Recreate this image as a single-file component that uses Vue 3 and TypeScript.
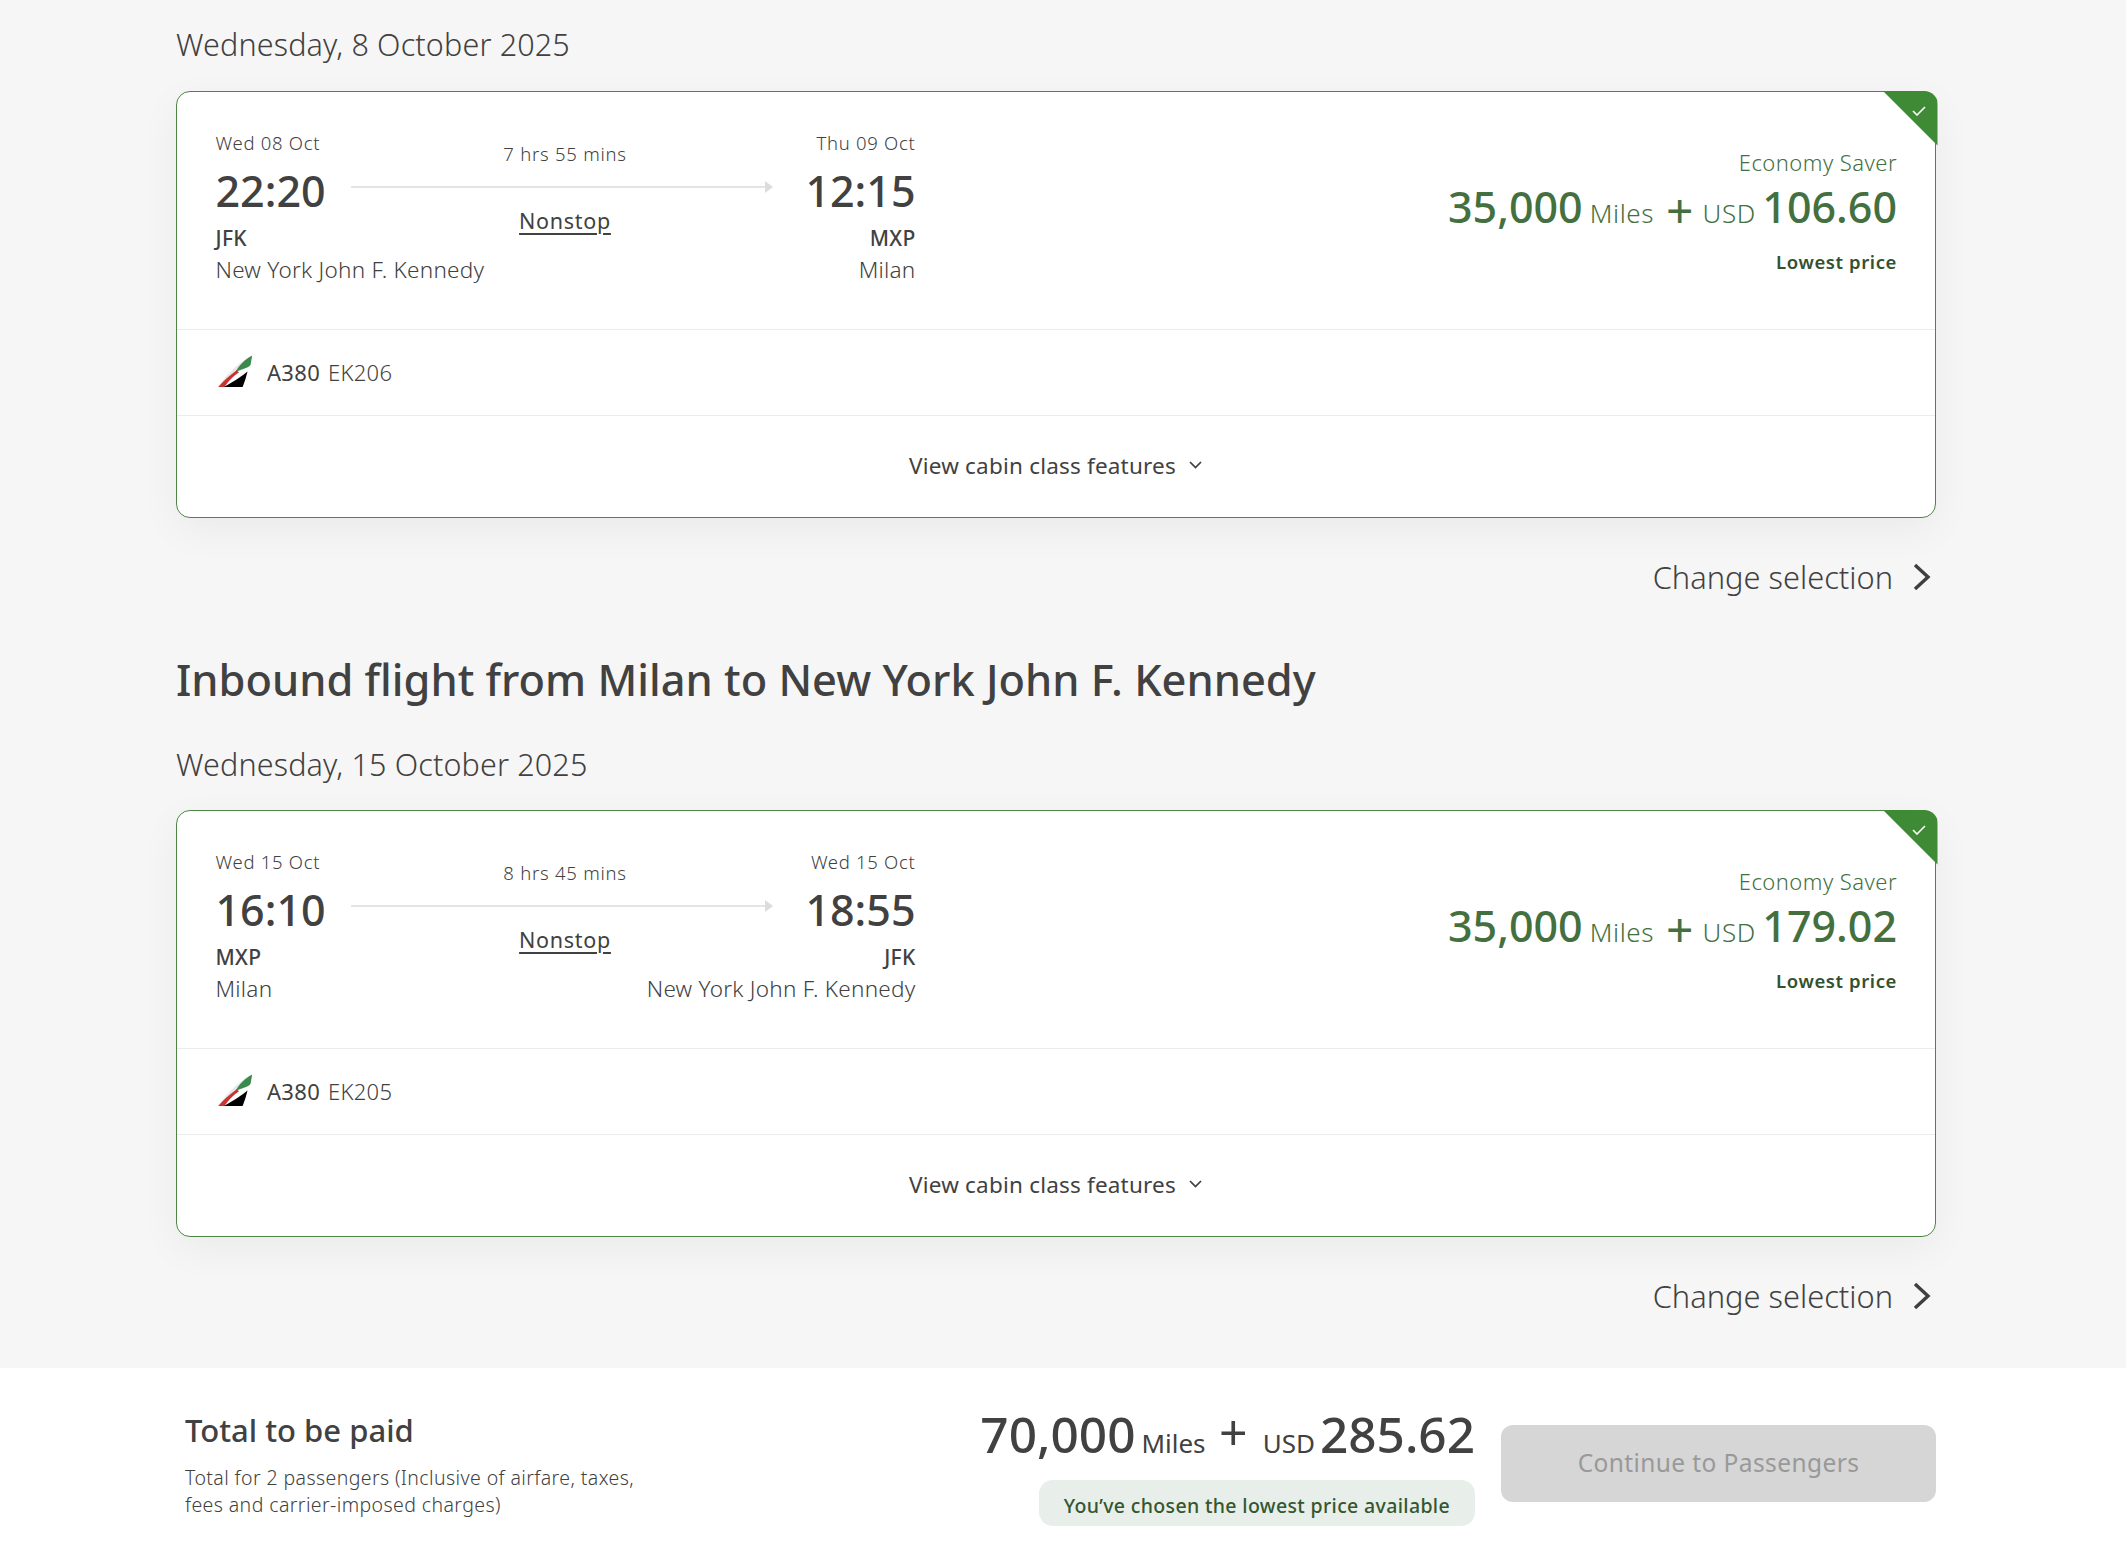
<script setup lang="ts">
interface Flight {
  date: string
  fromDate: string
  toDate: string
  depart: string
  arrive: string
  fromCode: string
  toCode: string
  fromCity: string
  toCity: string
  duration: string
  flightNo: string
  usd: string
}

const flights: Flight[] = [
  {
    date: 'Wednesday, 8 October 2025',
    fromDate: 'Wed 08 Oct',
    toDate: 'Thu 09 Oct',
    depart: '22:20',
    arrive: '12:15',
    fromCode: 'JFK',
    toCode: 'MXP',
    fromCity: 'New York John F. Kennedy',
    toCity: 'Milan',
    duration: '7 hrs 55 mins',
    flightNo: 'EK206',
    usd: '106.60'
  },
  {
    date: 'Wednesday, 15 October 2025',
    fromDate: 'Wed 15 Oct',
    toDate: 'Wed 15 Oct',
    depart: '16:10',
    arrive: '18:55',
    fromCode: 'MXP',
    toCode: 'JFK',
    fromCity: 'Milan',
    toCity: 'New York John F. Kennedy',
    duration: '8 hrs 45 mins',
    flightNo: 'EK205',
    usd: '179.02'
  }
]
</script>

<template>
  <div class="page">
    <main class="content">
      <template v-for="(flight, i) in flights" :key="flight.flightNo">
        <h2 v-if="i === 1" class="section-title">Inbound flight from Milan to New York John F. Kennedy</h2>
        <p class="flight-date" :class="{ first: i === 0 }">{{ flight.date }}</p>
        <section class="card">
          <div class="corner">
            <svg class="corner-check" width="14" height="10" viewBox="0 0 14 10" fill="none" stroke="#fff" stroke-width="1.6">
              <path d="M1 5 L5 9 L13 1" />
            </svg>
          </div>
          <div class="card-main">
            <div class="route">
              <div class="route-row dates">
                <span>{{ flight.fromDate }}</span>
                <span>{{ flight.toDate }}</span>
              </div>
              <div class="route-row times">
                <span class="time">{{ flight.depart }}</span>
                <div class="track">
                  <span class="duration">{{ flight.duration }}</span>
                  <span class="line"></span>
                  <span class="arrow"></span>
                  <a class="stops">Nonstop</a>
                </div>
                <span class="time">{{ flight.arrive }}</span>
              </div>
              <div class="route-row codes">
                <span>{{ flight.fromCode }}</span>
                <span>{{ flight.toCode }}</span>
              </div>
              <div class="route-row cities">
                <span>{{ flight.fromCity }}</span>
                <span>{{ flight.toCity }}</span>
              </div>
            </div>
            <div class="fare">
              <div class="fare-name">Economy Saver</div>
              <div class="fare-price">
                <span class="amount">35,000</span>
                <span class="unit miles">Miles</span>
                <span class="plus">+</span>
                <span class="unit usd">USD</span>
                <span class="amount">{{ flight.usd }}</span>
              </div>
              <div class="fare-note">Lowest price</div>
            </div>
          </div>
          <div class="card-flight">
            <svg class="tail" width="35" height="33" viewBox="57 50 105 100">
              <path d="M57 147 C85 105 125 70 160 50 L132 147 Z" fill="#e6e6e6" />
              <path d="M118 100 L150 85 L146 100 L78 147 L75 147 Z" fill="#fff" />
              <path d="M160 52 C138 62 122 80 110 100 C125 94 146 90 155 80 Z" fill="#3a8a4d" />
              <path d="M113 96 C95 110 72 128 57 147 L76 147 C85 132 105 112 120 102 Z" fill="#c8332f" />
              <path d="M146 100 C132 112 108 128 74 147 L131 147 C137 132 142 116 146 100 Z" fill="#000" />
            </svg>
            <span class="aircraft">A380</span>
            <span class="flight-no">{{ flight.flightNo }}</span>
          </div>
          <div class="card-toggle">
            <span>View cabin class features</span>
            <svg width="15" height="10" viewBox="0 0 15 10" fill="none" stroke="#3f3f3f" stroke-width="1.7">
              <path d="M2 2 L7.5 7.5 L13 2" />
            </svg>
          </div>
        </section>
        <div class="change">
          <span>Change selection</span>
          <svg width="20" height="28" viewBox="0 0 20 28" fill="none" stroke="#3f3f3f" stroke-width="3.4">
            <path d="M3 2 L16 14 L3 26" />
          </svg>
        </div>
      </template>
    </main>
    <footer class="summary">
      <div class="summary-inner">
        <div class="summary-text">
          <div class="summary-title">Total to be paid</div>
          <p class="summary-sub">Total for 2 passengers (Inclusive of airfare, taxes,<br />fees and carrier-imposed charges)</p>
        </div>
        <div class="summary-price">
          <div class="total">
            <span class="total-amount">70,000</span>
            <span class="total-unit miles">Miles</span>
            <span class="total-plus">+</span>
            <span class="total-unit usd">USD</span>
            <span class="total-amount">285.62</span>
          </div>
          <div class="pill">You’ve chosen the lowest price available</div>
        </div>
        <button class="continue" disabled>Continue to Passengers</button>
      </div>
    </footer>
  </div>
</template>

<style>
html,
body {
  margin: 0;
  background: #f6f6f6;
}
</style>

<style scoped>
.page {
  width: 2126px;
  height: 1566px;
  overflow: hidden;
  font-family: "Noto Sans", sans-serif;
  color: #414141;
  display: flex;
  flex-direction: column;
}

.content {
  width: 1760px;
  margin-left: 176px;
  height: 1368px;
  flex: none;
}

.flight-date {
  margin: 0 0 25px;
  font-size: 30.5px;
  line-height: 42px;
  font-weight: 300;
  letter-spacing: 0.15px;
}

.flight-date.first {
  margin-bottom: 26px;
  padding-top: 23px;
}

.section-title {
  margin: 50px 0 32px;
  font-size: 43.4px;
  line-height: 62px;
  font-weight: 500;
}

.card {
  position: relative;
  height: 427px;
  box-sizing: border-box;
  background: #fff;
  border: 1.5px solid #4e8545;
  border-radius: 14px;
  box-shadow: 0 12px 40px rgba(0, 0, 0, 0.05);
}

.corner {
  position: absolute;
  top: -1.5px;
  right: -2.5px;
  width: 55px;
  height: 55px;
  background: #3f8a34;
  clip-path: polygon(0 0, 100% 0, 100% 100%);
  border-top-right-radius: 14px;
}

.corner-check {
  position: absolute;
  top: 15.5px;
  right: 11.5px;
}

.card-main {
  height: 238px;
  box-sizing: border-box;
  padding: 38px 38px 0 38.5px;
  display: flex;
  justify-content: space-between;
  border-bottom: 1.5px solid #ececec;
}

.route {
  width: 700px;
}

.route-row {
  display: flex;
  justify-content: space-between;
  white-space: nowrap;
}

.dates {
  font-size: 18.5px;
  line-height: 26px;
  font-weight: 300;
  letter-spacing: 0.7px;
}

.times {
  align-items: center;
  margin-top: 5px;
}

.time {
  font-size: 43px;
  line-height: 60px;
  font-weight: 500;
}

.track {
  position: relative;
  flex: 1;
  margin: 0 34px 0 25px;
  height: 60px;
}

.line {
  position: absolute;
  left: 0;
  right: 0;
  top: 25px;
  height: 1.5px;
  background: #e4e4e4;
}

.arrow {
  position: absolute;
  right: -2px;
  top: 20px;
  border-left: 8px solid #dcdcdc;
  border-top: 6px solid transparent;
  border-bottom: 6px solid transparent;
}

.duration,
.stops {
  position: absolute;
  left: 8px;
  right: 0;
  text-align: center;
}

.duration {
  top: -20px;
  font-size: 18.5px;
  line-height: 26px;
  font-weight: 300;
  letter-spacing: 0.75px;
}

.stops {
  top: 45px;
  font-size: 21.5px;
  line-height: 30px;
  font-weight: 400;
  letter-spacing: 0.7px;
  text-decoration: underline;
  text-underline-offset: 4px;
}

.codes {
  margin-top: 2px;
  font-size: 21px;
  line-height: 30px;
  font-weight: 500;
  letter-spacing: 0.3px;
}

.cities {
  margin-top: 2px;
  font-size: 22.5px;
  line-height: 30px;
  font-weight: 300;
  letter-spacing: 0.25px;
}

.fare {
  text-align: right;
  padding-top: 16.5px;
  color: #44703f;
  white-space: nowrap;
}

.fare-name {
  font-size: 22px;
  line-height: 30px;
  font-weight: 300;
  letter-spacing: 0.45px;
}

.fare-price {
  display: flex;
  justify-content: flex-end;
  align-items: baseline;
  line-height: 60px;
}

.amount {
  font-size: 43px;
  font-weight: 500;
}

.unit {
  font-size: 26px;
  font-weight: 300;
  letter-spacing: 0.6px;
}

.miles {
  margin-left: 7px;
}

.plus {
  font-size: 48px;
  line-height: 40px;
  margin: 0 9px 0 12px;
  transform: translateY(5px);
}

.usd {
  margin-right: 6.5px;
}

.fare-note {
  margin-top: 6.5px;
  font-size: 18.5px;
  line-height: 26px;
  font-weight: 600;
  letter-spacing: 0.6px;
  color: #33522f;
}

.card-flight {
  height: 86px;
  box-sizing: border-box;
  padding: 0 0 2px 41px;
  display: flex;
  align-items: center;
  border-bottom: 1.5px solid #ececec;
  font-size: 22px;
  letter-spacing: 0.3px;
}

.tail {
  margin-right: 14px;
}

.aircraft {
  font-weight: 400;
  margin-right: 8px;
}

.flight-no {
  font-weight: 300;
}

.card-toggle {
  height: 98px;
  display: flex;
  align-items: center;
  justify-content: center;
  gap: 12px;
  font-size: 22.5px;
  letter-spacing: 0.2px;
}

.change {
  margin-top: 37px;
  height: 44px;
  display: flex;
  justify-content: flex-end;
  align-items: center;
  gap: 19px;
  padding-right: 4px;
  font-size: 30.8px;
  font-weight: 300;
}

.summary {
  flex: 1;
  background: #fff;
}

.summary-inner {
  width: 1760px;
  margin-left: 176px;
  display: flex;
  align-items: flex-start;
}

.summary-text {
  flex: 1;
  padding: 40px 0 0 9px;
}

.summary-title {
  font-size: 31px;
  line-height: 44px;
  font-weight: 500;
}

.summary-sub {
  margin: 11.5px 0 0;
  font-size: 19.5px;
  line-height: 27px;
  font-weight: 300;
  letter-spacing: 0.4px;
}

.summary-price {
  padding-top: 31px;
  display: flex;
  flex-direction: column;
  align-items: flex-end;
}

.total {
  display: flex;
  align-items: baseline;
  white-space: nowrap;
  line-height: 70px;
}

.total-amount {
  font-size: 49.5px;
  font-weight: 500;
}

.total-unit {
  font-size: 26px;
  font-weight: 400;
}

.total-unit.miles {
  margin-left: 6px;
}

.total-unit.usd {
  margin-right: 5px;
}

.total-plus {
  font-size: 50px;
  line-height: 40px;
  margin: 0 15px 0 13.5px;
  transform: translateY(-3px);
}

.pill {
  margin-top: 1.5px;
  height: 46px;
  box-sizing: border-box;
  padding: 5px 25px 0;
  display: flex;
  align-items: center;
  background: #e8eeea;
  border-radius: 14px;
  font-size: 19.5px;
  font-weight: 500;
  letter-spacing: 0.35px;
  color: #33572f;
  white-space: nowrap;
}

.continue {
  margin: 57px 0 0 26px;
  width: 435px;
  height: 77px;
  padding: 0 0 2px;
  border: none;
  border-radius: 12px;
  background: #d6d6d6;
  color: #999;
  font-family: inherit;
  font-size: 24.5px;
  font-weight: 400;
  letter-spacing: 0.4px;
}
</style>
